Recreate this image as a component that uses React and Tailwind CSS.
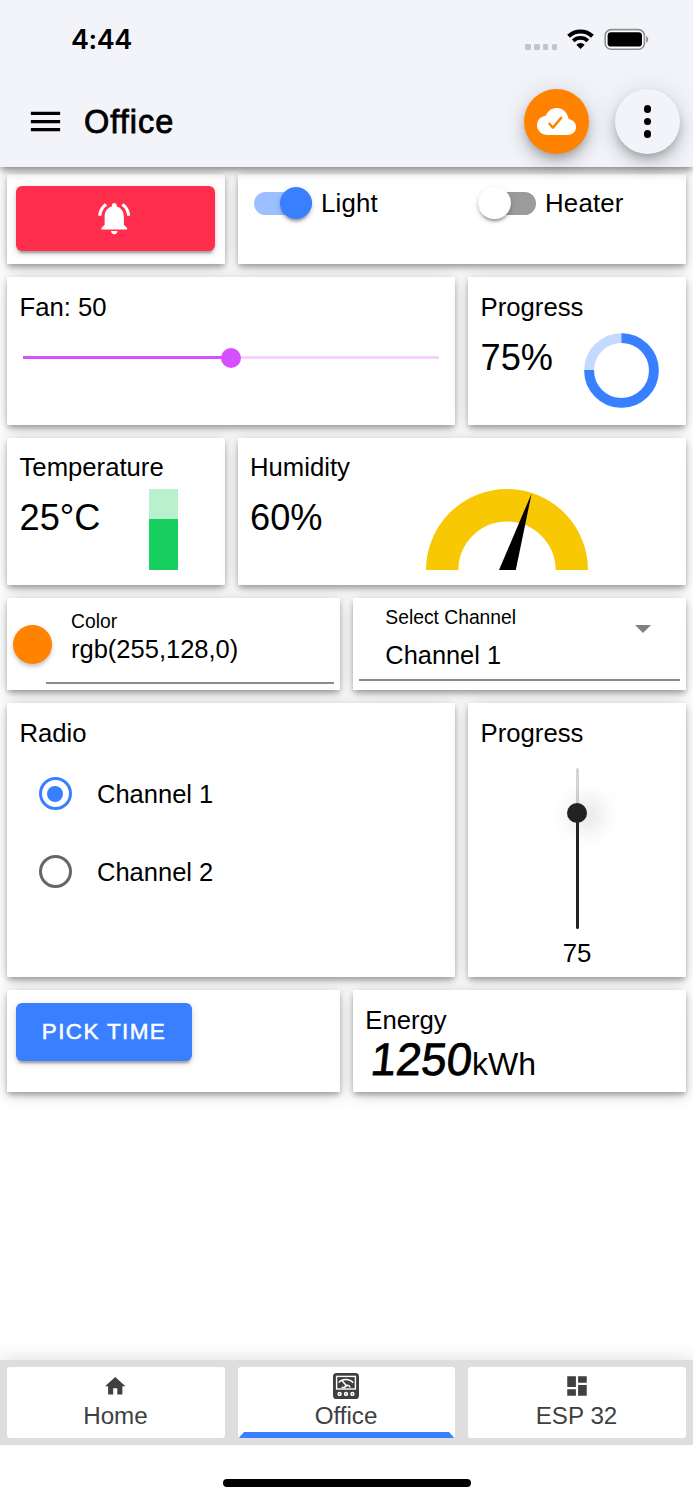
import * as React from "react";
import { MdMenu, MdNotificationsActive, MdHome, MdDashboard } from "react-icons/md";
import { IoCloudDone } from "react-icons/io5";

function StatusBar() {
  return (
    <div className="flex h-[77px] items-start justify-between pl-[71px] pr-[44px] pt-[26px]">
      <span className="font-['Inter',sans-serif] text-[27px] font-semibold leading-[28px] tracking-[-0.4px]">4:44</span>
      <div className="flex items-start">
        <div className="mt-[18px] flex gap-[3.2px]">
          {[0, 1, 2, 3].map((i) => (
            <div key={i} className="h-[5.5px] w-[5.5px] rounded-[1.5px] bg-[#c3c4c8]"></div>
          ))}
        </div>
        <svg className="ml-[10px] mt-[3px] h-[21px] w-[27px]" viewBox="0 0 27 21" fill="none" stroke="#000">
          <path d="M1.6 7.2a17.2 17.2 0 0 1 23.8 0" strokeWidth="4" />
          <path d="M6.2 11.8a10.6 10.6 0 0 1 14.6 0" strokeWidth="3.8" />
          <path d="M13.5 20l-4.2-4.3a6 6 0 0 1 8.4 0z" fill="#000" stroke="none" />
        </svg>
        <svg className="ml-[10px] mt-[2px] h-[23px] w-[45px]" viewBox="0 0 45 23">
          <rect x="1.2" y="1.6" width="39.2" height="19.6" rx="6" fill="#fff" stroke="#8e8f92" strokeWidth="1.6" />
          <rect x="3.6" y="4.2" width="34.4" height="14.4" rx="3.4" fill="#000" />
          <path d="M42.2 8v6.8c1.2-.6 2-1.9 2-3.4s-.8-2.8-2-3.4z" fill="#8e8f92" />
        </svg>
      </div>
    </div>
  );
}

function Header() {
  return (
    <header className="relative z-10 h-[167px] bg-[#f3f4f9] shadow-[0_3px_6px_-1px_rgba(0,0,0,0.3),0_5px_8px_0_rgba(0,0,0,0.16),0_2px_16px_0_rgba(0,0,0,0.12)]">
      <StatusBar />
      <div className="flex h-[89px] items-center pl-[26px] pr-[13px]">
        <MdMenu className="h-[39px] w-[39px]" />
        <h1 className="ml-[19px] flex-1 text-[32.5px] leading-[40px] tracking-[1px] [-webkit-text-stroke:0.8px_#000]">Office</h1>
        <div className="flex gap-[26px]">
          <button className="flex h-[65px] w-[65px] items-center justify-center rounded-full bg-[#ff8200] shadow-[0_5px_8px_-2px_rgba(0,0,0,0.2),0_10px_16px_0_rgba(0,0,0,0.14),0_2px_29px_0_rgba(0,0,0,0.12)]">
            <IoCloudDone className="h-[39px] w-[39px] text-white" />
          </button>
          <button className="flex h-[65px] w-[65px] flex-col items-center justify-center gap-[4.5px] rounded-full bg-[#f3f4f9] shadow-[0_5px_8px_-2px_rgba(0,0,0,0.2),0_10px_16px_0_rgba(0,0,0,0.14),0_2px_29px_0_rgba(0,0,0,0.12)]">
            <i className="h-[7.7px] w-[7.7px] rounded-full bg-black"></i>
            <i className="h-[7.7px] w-[7.7px] rounded-full bg-black"></i>
            <i className="h-[7.7px] w-[7.7px] rounded-full bg-black"></i>
          </button>
        </div>
      </div>
    </header>
  );
}

function Card({ className, children }) {
  return (
    <div className={"bg-white shadow-[0_4px_6px_-1px_rgba(0,0,0,0.26),0_2px_5px_0_rgba(0,0,0,0.1),0_2px_18px_0_rgba(0,0,0,0.16)] " + className}>
      {children}
    </div>
  );
}

function Title({ children }) {
  return <div className="pl-[12.5px] pt-[14.5px] text-[25.7px] leading-[30px]">{children}</div>;
}

function Value({ children }) {
  return <div className="ml-[12.5px] mt-[16px] text-[36.2px] leading-[40px]">{children}</div>;
}

function Toggle({ label, on }) {
  return (
    <div className="flex h-[32px] items-center">
      <div className={"flex h-[23px] w-[58px] items-center rounded-full " + (on ? "justify-end bg-[#9cc0ff]" : "bg-[#9b9b9b]")}>
        <div className={"h-[32.5px] w-[32.5px] shrink-0 rounded-full shadow-[0_5px_2px_-3px_rgba(0,0,0,0.2),0_3px_3px_0_rgba(0,0,0,0.14),0_2px_6px_0_rgba(0,0,0,0.12)] " + (on ? "bg-[#3880ff]" : "bg-white")}></div>
      </div>
      <span className="ml-[9px] text-[25.8px] leading-[30px] tracking-[0.2px]">{label}</span>
    </div>
  );
}

function Radio({ label, checked }) {
  return (
    <div className="flex h-[78px] items-center gap-[25.5px] pl-[31.5px]">
      <div className={"flex h-[33px] w-[33px] items-center justify-center rounded-full border-[3.2px] " + (checked ? "border-[#3880ff]" : "border-[#666]")}>
        {checked && <div className="h-[16px] w-[16px] rounded-full bg-[#3880ff]"></div>}
      </div>
      <span className="text-[25.5px] leading-[30px]">{label}</span>
    </div>
  );
}

function MeterIcon() {
  return (
    <svg className="h-[26px] w-[26px]" viewBox="0 0 26 26">
      <rect width="26" height="26" rx="3.6" fill="#3f3f3f" />
      <rect x="3.6" y="3.4" width="18.8" height="12.6" fill="none" stroke="#fff" strokeWidth="1.4" />
      <g fill="none" stroke="#fff" strokeWidth="1.5">
        <path d="M5.8 9.6C9 5.6 16.5 5.4 20.2 9.8" />
        <path d="M9 7.4l5 6" />
        <path d="M8.6 14.4h3.2c.6-3 4.4-3 5.4 0" />
      </g>
      <g fill="none" stroke="#fff" strokeWidth="1.6">
        <circle cx="6.6" cy="20.9" r="1.4" />
        <circle cx="13" cy="20.9" r="1.4" />
        <circle cx="19.4" cy="20.9" r="1.4" />
      </g>
    </svg>
  );
}

function Tab({ icon, label, active }) {
  return (
    <div className="relative col-span-2 flex flex-col items-center overflow-hidden rounded-[3px] bg-white pr-[1px] text-[#404040]">
      <div className="flex h-[26px] mt-[6px] items-center justify-center">{icon}</div>
      <span className="mt-[3px] text-[24.2px] leading-[28px]">{label}</span>
      {active && <div className="absolute inset-x-[1px] bottom-0 h-[6.5px] bg-[#3880ff] [clip-path:polygon(6px_0,calc(100%-6px)_0,100%_100%,0_100%)]"></div>}
    </div>
  );
}

export default function App() {
  return (
    <div className="flex h-[1500px] w-[693px] flex-col overflow-hidden bg-white font-['Liberation_Sans',Arial,sans-serif] text-black">
      <Header />

      {/* Widgets */}
      <main className="flex-1 px-[7px] pt-[7px]">
        <div className="grid grid-cols-6 grid-rows-[90px_147.5px_147.5px_92px_274px_102px] gap-x-[12.6px] gap-y-[13px]">
          <Card className="col-span-2 pl-[9px] pr-[10px] pt-[12px]">
            <button className="flex h-[65px] w-full items-center justify-center rounded-[6px] bg-[#ff2e4c] pb-[1px] pr-[2px] shadow-[0_5px_2px_-3px_rgba(0,0,0,0.2),0_3px_3px_0_rgba(0,0,0,0.14),0_2px_8px_0_rgba(0,0,0,0.12)]">
              <MdNotificationsActive className="h-[38.5px] w-[38.5px] text-white" />
            </button>
          </Card>

          <Card className="col-span-4 grid grid-cols-2 pl-[16.5px] pt-[13px]">
            <Toggle label="Light" on />
            <div className="pl-[8px]">
              <Toggle label="Heater" />
            </div>
          </Card>

          <Card className="col-span-4">
            <Title>Fan: 50</Title>
            <div className="mx-[16px] mt-[26px] flex h-[20px] items-center">
              <div className="h-[3.5px] flex-1 bg-[#d650ff]"></div>
              <div className="z-1 -mx-[10px] h-[20px] w-[20px] rounded-full bg-[#d650ff]"></div>
              <div className="h-[3.5px] flex-1 bg-[#f5d3ff]"></div>
            </div>
          </Card>

          <Card className="col-span-2">
            <Title>Progress</Title>
            <div className="flex items-start justify-between pr-[27px]">
              <Value>75%</Value>
              <svg className="mt-[11.5px] h-[75px] w-[75px]" viewBox="0 0 75 75" fill="none" strokeWidth="9.8">
                <circle cx="37.5" cy="37.5" r="32.4" stroke="#c3d9ff" />
                <path d="M37.5 5.1A32.4 32.4 0 1 1 5.1 37" stroke="#3880ff" />
              </svg>
            </div>
          </Card>

          <Card className="col-span-2">
            <Title>Temperature</Title>
            <div className="flex items-start justify-between pr-[47px]">
              <Value>25°C</Value>
              <div className="mt-[7px] flex h-[81px] w-[29px] flex-col justify-end bg-[#b9f1cf]">
                <div className="h-[51px] bg-[#18d05f]"></div>
              </div>
            </div>
          </Card>

          <Card className="col-span-4">
            <Title>Humidity</Title>
            <div className="flex items-start justify-between pr-[98px]">
              <Value>60%</Value>
              <svg className="mt-[7px] h-[81px] w-[162px]" viewBox="0 0 162 81">
                <path d="M16.2 81a64.8 64.8 0 0 1 129.6 0" fill="none" stroke="#f9c804" strokeWidth="32.4" />
                <path d="M105.6 4.5L73 81h16.8z" fill="#000" />
              </svg>
            </div>
          </Card>

          <Card className="col-span-3 px-[6px]">
            <div className="flex items-start">
              <div className="mt-[27px] h-[39px] w-[39px] rounded-full bg-[#ff8200] shadow-[0_3px_3px_0_rgba(0,0,0,0.12),0_2px_6px_0_rgba(0,0,0,0.12)]"></div>
              <div className="ml-[19px] pt-[13px]">
                <div className="text-[19.3px] leading-[22px]">Color</div>
                <div className="mt-[1px] text-[25.5px] leading-[30px]">rgb(255,128,0)</div>
              </div>
            </div>
            <div className="ml-[32.5px] mt-[18px] h-[2px] bg-[#8a8a8a]"></div>
          </Card>

          <Card className="col-span-3 px-[6.5px]">
            <div className="flex items-start justify-between pl-[26px] pr-[29px] pt-[9px]">
              <div>
                <div className="text-[19.3px] leading-[22px]">Select Channel</div>
                <div className="mt-[11px] text-[25.4px] leading-[30px]">Channel 1</div>
              </div>
              <svg className="mt-[18px] h-[8px] w-[16px]" viewBox="0 0 16 8">
                <path d="M0 0h16L8 8z" fill="#808080" />
              </svg>
            </div>
            <div className="mt-[8.5px] h-[2px] bg-[#8a8a8a]"></div>
          </Card>

          <Card className="col-span-4">
            <Title>Radio</Title>
            <div className="mt-[7px]">
              <Radio label="Channel 1" checked />
              <Radio label="Channel 2" />
            </div>
          </Card>

          <Card className="col-span-2">
            <Title>Progress</Title>
            <div className="mt-[20px] flex h-[161px] flex-col items-center">
              <div className="h-[45px] w-[3px] rounded-t-full bg-[#d3d3d4]"></div>
              <div className="-my-[10px] h-[20px] w-[20px] shrink-0 rounded-full bg-[#222] shadow-[9px_2px_26px_0_rgba(0,0,0,0.3)]"></div>
              <div className="w-[3px] flex-1 rounded-b-full bg-[#222]"></div>
            </div>
            <div className="mt-[9px] text-center text-[25.8px] leading-[30px]">75</div>
          </Card>

          <Card className="col-span-3 pl-[9px] pt-[12.5px]">
            <button className="h-[58.5px] w-[176px] rounded-[6px] bg-[#3880ff] text-[22.5px] tracking-[1.35px] text-white shadow-[0_5px_2px_-3px_rgba(0,0,0,0.2),0_3px_3px_0_rgba(0,0,0,0.14),0_2px_8px_0_rgba(0,0,0,0.12)] [-webkit-text-stroke:0.5px_#fff]">
              PICK TIME
            </button>
          </Card>

          <Card className="col-span-3">
            <Title>Energy</Title>
            <div className="flex items-baseline pl-[18px] leading-[50px]">
              <span className="inline-block -skew-x-6 text-[45.5px] [-webkit-text-stroke:0.8px_#000]">1250</span>
              <span className="text-[32px]">kWh</span>
            </div>
          </Card>
        </div>
      </main>

      {/* Tab Bar */}
      <nav className="grid h-[85px] grid-cols-6 gap-x-[12.6px] bg-[#dedede] px-[7px] py-[7px] shadow-[0_-2px_18px_0_rgba(0,0,0,0.12)]">
        <Tab icon={<MdHome className="h-[24.5px] w-[24.5px]" />} label="Home" />
        <Tab icon={<MeterIcon />} label="Office" active />
        <Tab icon={<MdDashboard className="h-[26px] w-[26px]" />} label="ESP 32" />
      </nav>
      <div className="relative flex h-[55px] items-start justify-center bg-white pt-[33.5px]">
        <div className="h-[8.5px] w-[248px] rounded-full bg-black"></div>
      </div>
    </div>
  );
}
